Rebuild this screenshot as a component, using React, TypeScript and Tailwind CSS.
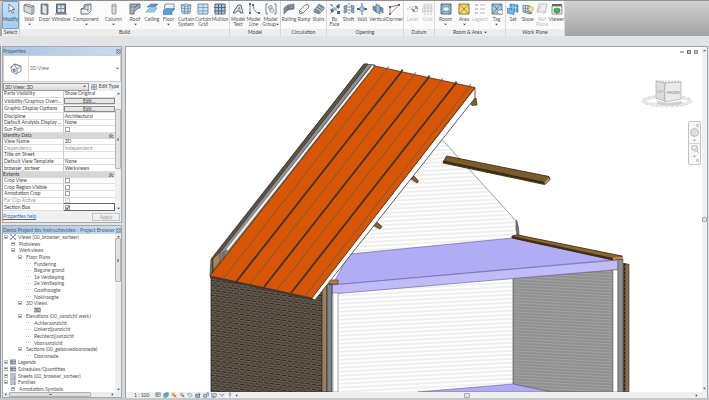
import type { ReactNode } from "react";
import { clsx } from "clsx";

type Tool = {
  label: string[];
  width: string;
  icon: ReactNode;
  menu?: boolean;
  disabled?: boolean;
};

type ToolGroup = { title: string; tools: Tool[] };

const ink = "#5c6773";
const blue = "#5b9fd0";
const pale = "#cfe2f0";

const icons = {
  modify: <path d="M4 1v8l2-2 1.4 3.4 1.3-.6L7.300 6.500H10z" fill="#fff" stroke={ink} strokeWidth=".8" />,
  wall: (
    <>
      <path d="M1 2l3-1 7 2v7l-2 1.500-8-3z" fill="#d5dade" stroke={ink} strokeWidth=".7" />
      <path d="M1 2l8 2.500v7M9 4.500L11 3" fill="none" stroke={ink} strokeWidth=".7" />
    </>
  ),
  door: (
    <>
      <path d="M2 1h7v10H2z" fill="#8b949e" stroke={ink} strokeWidth=".7" />
      <path d="M3 1l5 2v9L3 10z" fill="#e4e8eb" stroke={ink} strokeWidth=".7" />
    </>
  ),
  window: (
    <>
      <path d="M1.500 1h9v9h-9z" fill="#7f8b99" stroke={ink} />
      <path d="M3 2.500h2.500v2.500H3zM6.500 2.500H9V5H6.500zM3 6h2.500v3H3zM6.500 6H9v3H6.500z" fill="#dce9f2" />
      <path d="M0 11h12" stroke={ink} />
    </>
  ),
  component: (
    <>
      <path d="M1 6l3-1V2l3-1h4v7l-3 3H1z" fill="#eef0f2" stroke={ink} strokeWidth=".9" />
      <path d="M1 6h4V3l3-.5v6M5 6l3 1M8 2.500L11 1" fill="none" stroke={ink} strokeWidth=".7" />
    </>
  ),
  column: (
    <>
      <path d="M4 2v8.500q2 1.500 4 0V2z" fill="#d9dde1" stroke={ink} strokeWidth=".6" />
      <ellipse cx="6" cy="2" rx="2" ry="1" fill="#fff" stroke={ink} strokeWidth=".6" />
    </>
  ),
  roof: (
    <>
      <path d="M1 1h10v4H9L5 9v2H1z" fill="#a9b4be" stroke={ink} strokeWidth=".9" />
      <path d="M1 4h5l3-3M5 9V6l4-4" fill="none" stroke={ink} strokeWidth=".7" />
    </>
  ),
  ceiling: (
    <>
      <path d="M1 4l4-3h7L9 4z" fill={blue} stroke={ink} strokeWidth=".6" />
      <path d="M0 9l4-4h7L8 9zM1 7h9" fill={pale} stroke={blue} strokeWidth=".8" />
    </>
  ),
  floor: (
    <>
      <path d="M2 1h9v6L8 8H1z" fill="#eef1f3" stroke={ink} strokeWidth=".7" />
      <path d="M0 8l3-2.500h8.500L9 9v2.500H0z" fill={blue} stroke="#3d7fb5" strokeWidth=".6" />
    </>
  ),
  curtainSystem: (
    <>
      <path d="M1 2q5-2 10 0l-1 8q-4 2-8 0z" fill={pale} />
      <path d="M1 2q5 3 10 0l-1 8q-4 2-8 0zM1.500 5q5 2 9 0M2 8q4 2 8 0M4.500 3v8M8 3v8M1 2q5-2 10 0" fill="none" stroke="#4f7ba3" strokeWidth=".7" />
    </>
  ),
  curtainGrid: (
    <>
      <path d="M1 1h10v10H1z" fill={pale} stroke={ink} strokeWidth=".7" />
      <path d="M6 1v10M1 4.500h10M1 8h10" stroke={blue} strokeWidth=".8" />
    </>
  ),
  mullion: (
    <>
      <path d="M1 1h10v10H1z" fill="#9fcbe8" stroke={ink} />
      <path d="M4.500 1v10M7.500 1v10M0 4.500h12M0 8h12" stroke={ink} />
    </>
  ),
  modelText: (
    <>
      <path d="M1 10L6 2h3l2 8H8.500L8 8H5l-1.500 2z" fill="#e3e7ea" stroke={ink} />
      <path d="M6 6l1.500-2 .3 2z" fill="#fff" stroke={ink} strokeWidth=".6" />
    </>
  ),
  modelLine: (
    <>
      <path d="M2 1v9M5 2q1 8 6 8" fill="none" stroke={ink} strokeWidth=".8" />
      <path d="M1 0h2v2H1zM1 9h2v2H1zM4 1h2v2H4zM10 9h2v2h-2z" fill={ink} />
    </>
  ),
  modelGroup: (
    <>
      <path d="M3 1H1v10h2M9 1h2v10H9" fill="none" stroke={ink} strokeWidth=".8" />
      <path d="M3 4l3-2 1.500 2L5 7z" fill="#d4d9de" stroke={ink} strokeWidth=".6" />
      <circle cx="7" cy="7.500" r="2" fill="#eceff1" stroke={ink} strokeWidth=".6" />
    </>
  ),
  railing: (
    <>
      <path d="M1 5l4-3 6-1v5L5 7l-4 4z" fill="#98a1aa" />
      <path d="M1 5l4-3 6-1M1 7l4-3 6-1M1 9l4-3 6-1M1 11l4-4 6-1M1 5v6M5 2v5M11 1v5" fill="none" stroke={ink} strokeWidth=".7" />
    </>
  ),
  ramp: <path d="M1 8l6-6 3-.5L11 4l-6 6-3 1zM2 8l3 2" fill="#f1f3f5" stroke={ink} strokeWidth=".8" />,
  stairs: (
    <>
      <path d="M1 7l5-6 5 3v2l-5 5-5-2z" fill="#b7bec6" stroke={ink} strokeWidth=".7" />
      <path d="M2 6l5 3M4 4l4.500 3M5.500 2l4.500 3M2 8l4 2" stroke={ink} />
    </>
  ),
  byFace: (
    <>
      <path d="M1 1l10 10M11 1L1 11" stroke={blue} strokeWidth=".9" strokeDasharray="2 1" />
      <path d="M1 7l3-2 1 3-2 2zM7 3l3-2 1 3-2 2zM8 8h3v3H8zM1 2l2-1 1 2z" fill={ink} />
      <path d="M5 4l3 1-1 3-3-1z" fill="#8cbfe2" />
    </>
  ),
  shaft: (
    <>
      <path d="M1 3l3-1v3L1 6zM1 7l3-1v3l-3 1zM8 2l3 1v3L8 5zM8 6l3 1v3L8 9z" fill="#7fb4da" stroke={ink} strokeWidth=".6" />
      <path d="M6 0v12" stroke={ink} strokeWidth=".8" strokeDasharray="2 1" />
    </>
  ),
  wallOpening: (
    <>
      <path d="M6 0v4M6 8v4" stroke={ink} />
      <path d="M1 5h3v2H1zM8 5h3v2H8z" fill={ink} />
      <path d="M4 4h4v4H4z" fill="#a6cfea" stroke={blue} strokeWidth=".7" />
    </>
  ),
  vertical: (
    <>
      <path d="M1 3l3 1v5L1 7zM8 4l3 1v5L8 8z" fill="#7f98ae" stroke={ink} strokeWidth=".6" />
      <path d="M4 1l4 2v8L4 9z" fill="#8cc0e4" stroke={ink} strokeWidth=".7" />
    </>
  ),
  dormer: (
    <>
      <path d="M1 11V4l8-2" fill="none" stroke={ink} strokeWidth=".7" />
      <path d="M2 4l8-2-8 8" fill="none" stroke="#c9716a" strokeWidth=".8" />
      <path d="M0 10h2v2H0zM9 1h2v2H9zM0 3h2v2H0z" fill={ink} />
    </>
  ),
  level: (
    <>
      <path d="M0 6h12M2 4h3" stroke="#aaa" strokeWidth=".7" strokeDasharray="2 1" />
      <circle cx="8" cy="6" r="3" fill="#fff" stroke="#999" strokeWidth=".7" />
      <path d="M8 3a3 3 0 013 3H8zM8 9a3 3 0 01-3-3h3z" fill="#999" />
    </>
  ),
  grid: (
    <>
      <path d="M3 2v10M6 2v10M9 2v10M1 5h10M1 8h10" stroke="#b5b5b5" strokeWidth=".7" />
      <path d="M2 1h2v2H2zM5 1h2v2H5zM8 1h2v2H8zM0 4h2v2H0zM0 7h2v2H0z" fill="#fff" stroke="#b5b5b5" strokeWidth=".5" />
    </>
  ),
  room: (
    <>
      <path d="M1 1h10v10H1z" fill="#8fc5e8" stroke={ink} />
      <path d="M1 1l10 10M11 1L1 11" stroke={ink} strokeWidth=".7" />
      <path d="M3 4h6v4H3z" fill="#e9f3fa" stroke={ink} strokeWidth=".5" />
    </>
  ),
  area: (
    <>
      <path d="M1 1h10v10H1z" fill="#f8d964" stroke="#8d7834" />
      <path d="M1 1l10 10M11 1L1 11" stroke="#8d7834" strokeWidth=".8" />
    </>
  ),
  legend: (
    <>
      <path d="M1 1h3v2H1zM1 5h3v2H1zM1 9h3v2H1z" fill="#ccc" />
      <path d="M6 2h5M6 6h5M6 10h5" stroke="#bbb" />
    </>
  ),
  tag: (
    <>
      <path d="M1 1h10v10H1z" fill="#9fcbe8" stroke={ink} strokeWidth=".8" />
      <path d="M1 1l8 8M10 1L1 11" stroke={ink} strokeWidth=".8" />
      <path d="M6 9l2-2h4v4H8z" fill="#fff" stroke={ink} strokeWidth=".6" />
    </>
  ),
  set: (
    <>
      <path d="M3 1l8 1v7L3 8z" fill="#4f9dd4" stroke="#2f75aa" strokeWidth=".6" />
      <path d="M0 5l7 1.500v5L0 10z" fill="#73b6e2" stroke="#2f75aa" strokeWidth=".6" />
      <path d="M3 4l8 1M6 1.500v6.500M8.500 2v7" stroke="#d5eaf7" strokeWidth=".6" />
    </>
  ),
  show: (
    <>
      <path d="M1 2l7 1v8l-7-2z" fill={pale} stroke={ink} strokeWidth=".7" />
      <path d="M1 5l7 1M1 7.500l7 1.500M3.500 2v8M6 2.500v8" stroke={ink} strokeWidth=".6" />
      <circle cx="9" cy="6" r="2.500" fill="#fbe08a" stroke="#b39b4f" strokeWidth=".5" />
      <path d="M8 9h2v2H8z" fill="#888" />
    </>
  ),
  refPlane: <path d="M3 1h8L9 9H1zM5 3L1 9M7 11l3-2" fill="#eee" stroke="#b5b5b5" strokeWidth=".8" />,
  viewer: (
    <>
      <path d="M1 3h10v8H1z" fill="#f3f5f6" stroke={ink} strokeWidth=".7" />
      <path d="M1 1h10v2H1z" fill="#626b75" />
      <path d="M3 6l3-1 3 1v3l-3 1.500L3 9z" fill="#4aa95a" stroke="#2d7a3b" strokeWidth=".5" />
    </>
  ),
};

const toolGroups: ToolGroup[] = [
  {
    title: "Build",
    tools: [
      { label: ["Wall"], width: "w-[18px]", icon: icons.wall, menu: true },
      { label: ["Door"], width: "w-[13px]", icon: icons.door },
      { label: ["Window"], width: "w-[20px]", icon: icons.window },
      { label: ["Component"], width: "w-[30px]", icon: icons.component, menu: true },
      { label: ["Column"], width: "w-[25px]", icon: icons.column, menu: true },
      { label: ["Roof"], width: "w-[18px]", icon: icons.roof, menu: true },
      { label: ["Ceiling"], width: "w-[16px]", icon: icons.ceiling },
      { label: ["Floor"], width: "w-[17px]", icon: icons.floor, menu: true },
      { label: ["Curtain", "System"], width: "w-[18px]", icon: icons.curtainSystem },
      { label: ["Curtain", "Grid"], width: "w-[16px]", icon: icons.curtainGrid },
      { label: ["Mullion"], width: "w-[18px]", icon: icons.mullion },
    ],
  },
  {
    title: "Model",
    tools: [
      { label: ["Model", "Text"], width: "w-[16px]", icon: icons.modelText },
      { label: ["Model", "Line"], width: "w-[15px]", icon: icons.modelLine },
      { label: ["Model", "Group"], width: "w-[19px]", icon: icons.modelGroup, menu: true },
    ],
  },
  {
    title: "Circulation",
    tools: [
      { label: ["Railing"], width: "w-[16px]", icon: icons.railing },
      { label: ["Ramp"], width: "w-[14px]", icon: icons.ramp },
      { label: ["Stairs"], width: "w-[15px]", icon: icons.stairs },
    ],
  },
  {
    title: "Opening",
    tools: [
      { label: ["By", "Face"], width: "w-[15px]", icon: icons.byFace },
      { label: ["Shaft"], width: "w-[13px]", icon: icons.shaft },
      { label: ["Wall"], width: "w-[14px]", icon: icons.wallOpening },
      { label: ["Vertical"], width: "w-[17px]", icon: icons.vertical },
      { label: ["Dormer"], width: "w-[17px]", icon: icons.dormer },
    ],
  },
  {
    title: "Datum",
    tools: [
      { label: ["Level"], width: "w-[17px]", icon: icons.level, disabled: true },
      { label: ["Grid"], width: "w-[13px]", icon: icons.grid, disabled: true },
    ],
  },
  {
    title: "Room & Area",
    tools: [
      { label: ["Room"], width: "w-[21px]", icon: icons.room, menu: true },
      { label: ["Area"], width: "w-[16px]", icon: icons.area, menu: true },
      { label: ["Legend"], width: "w-[16px]", icon: icons.legend, disabled: true },
      { label: ["Tag"], width: "w-[17px]", icon: icons.tag, menu: true },
    ],
  },
  {
    title: "Work Plane",
    tools: [
      { label: ["Set"], width: "w-[14px]", icon: icons.set },
      { label: ["Show"], width: "w-[15px]", icon: icons.show },
      { label: ["Ref", "Plane"], width: "w-[14px]", icon: icons.refPlane, disabled: true },
      { label: ["Viewer"], width: "w-[15px]", icon: icons.viewer },
    ],
  },
];

function Arrow({ dir = "down", className }: { dir?: "down" | "up" | "left" | "right"; className?: string }) {
  const d = { down: "M0 1h4L2 3z", up: "M0 3h4L2 1z", left: "M3 0v4L1 2z", right: "M1 0v4l2-2z" }[dir];
  return (
    <svg viewBox="0 0 4 4" className={clsx("size-[3px] shrink-0 fill-[#444]", className)}>
      <path d={d} />
    </svg>
  );
}

function ToolButton({ tool }: { tool: Tool }) {
  const sideArrow = tool.menu && tool.label.length > 1;
  return (
    <button
      disabled={tool.disabled}
      className={clsx(
        "flex h-full shrink-0 flex-col items-center pt-[2px] leading-[5px] whitespace-nowrap",
        tool.width,
        tool.disabled ? "text-[#bbb]" : "text-[#555]",
      )}
    >
      <svg viewBox="0 0 12 12" className="mb-[2px] size-3 shrink-0" fill="none">
        {tool.icon}
      </svg>
      {tool.label.map((line, i) => (
        <span key={line} className="flex items-center">
          {line}
          {sideArrow && i === 1 && <Arrow />}
        </span>
      ))}
      {tool.menu && !sideArrow && <Arrow className="mt-px" />}
    </button>
  );
}

function Ribbon() {
  return (
    <header className="flex h-9 shrink-0 border-t border-[#8d8f93] bg-linear-to-b from-[#d2d2d2] to-[#a3a3a3] pl-[2px]">
      <section className="flex w-[18px] shrink-0 flex-col border-r border-[#d8d8d8] bg-[#f8f8f8]">
        <button className="flex h-7 flex-col items-center rounded-[1px] border border-[#6da3cf] bg-linear-to-b from-[#c9e2f6] to-[#a3cdee] pt-px leading-[5px] text-[#35506b]">
          <svg viewBox="0 0 12 12" className="mb-[2px] size-3 shrink-0">
            {icons.modify}
          </svg>
          Modify
        </button>
        <h2 className="h-[7px] bg-[#ededed] text-center leading-[7px]">Select</h2>
      </section>
      {toolGroups.map((group) => (
        <section key={group.title} className="flex shrink-0 flex-col border-r border-[#d8d8d8] bg-[#fbfbfb]">
          <div className="flex h-7">
            {group.tools.map((tool) => (
              <ToolButton key={tool.label.join(" ")} tool={tool} />
            ))}
          </div>
          <h2 className="flex h-[7px] items-center justify-center gap-[2px] bg-[#ededed] leading-[7px]">
            {group.title}
            {group.title === "Room & Area" && <Arrow />}
          </h2>
        </section>
      ))}
    </header>
  );
}

function PanelTitle({ children }: { children: ReactNode }) {
  return (
    <div className="flex h-2 shrink-0 items-center justify-between bg-linear-to-r from-[#a9c6e2] to-[#c9dced] text-[#4c6074]">
      <h2 className="leading-[8px] whitespace-nowrap">{children}</h2>
      <button aria-label="Close" className="flex size-[5px] items-center justify-center border border-[#8fa6bb]">
        <svg viewBox="0 0 4 4" className="size-[3px]">
          <path d="M0 0l4 4M4 0L0 4" stroke="#5e7489" />
        </svg>
      </button>
    </div>
  );
}

type Row = {
  name: string;
  value?: string;
  kind?: "section" | "button" | "check";
  muted?: boolean;
  checked?: boolean;
};

const properties: Row[] = [
  { name: "Parts Visibility", value: "Show Original" },
  { name: "Visibility/Graphics Overr...", value: "Edit...", kind: "button" },
  { name: "Graphic Display Options", value: "Edit...", kind: "button" },
  { name: "Discipline", value: "Architectural" },
  { name: "Default Analysis Display ...", value: "None" },
  { name: "Sun Path", kind: "check" },
  { name: "Identity Data", kind: "section" },
  { name: "View Name", value: "3D" },
  { name: "Dependency", value: "Independent", muted: true },
  { name: "Title on Sheet", value: "" },
  { name: "Default View Template", value: "None" },
  { name: "browser_sorteer", value: "Werkviews" },
  { name: "Extents", kind: "section" },
  { name: "Crop View", kind: "check" },
  { name: "Crop Region Visible", kind: "check" },
  { name: "Annotation Crop", kind: "check" },
  { name: "Far Clip Active", kind: "check", muted: true },
  { name: "Section Box", kind: "check", checked: true },
];

function PropertyRow({ row }: { row: Row }) {
  if (row.kind === "section") {
    return (
      <tr className="bg-[#d6d6d6]">
        <th colSpan={2} scope="colgroup" className="p-0 text-left font-normal">
          <span className="flex items-center justify-between pr-[2px]">
            {row.name}
            <svg viewBox="0 0 4 4" className="size-[4px]">
              <path d="M0 2l2-1.500L4 2M0 4l2-1.500L4 4" fill="none" stroke="#444" strokeWidth=".8" />
            </svg>
          </span>
        </th>
      </tr>
    );
  }
  const id = row.name.toLowerCase().replace(/[^a-z]+/g, "-");
  return (
    <tr className={clsx("border-b border-[#dedede]", row.muted && "text-[#999]")}>
      <th scope="row" className="border-r border-[#cfcfcf] p-0 pl-px text-left font-normal whitespace-nowrap">
        {row.kind === "check" ? <label htmlFor={id}>{row.name}</label> : row.name}
      </th>
      <td className={clsx("p-0", row.checked && "border border-[#666]")}>
        {row.kind === "button" && (
          <button className="block h-[6px] w-full border border-[#8b8b8b] bg-[#e6e6e6] text-center leading-[4px]">
            {row.value}
          </button>
        )}
        {row.kind === "check" && (
          <span className="relative ml-px block size-[5px]">
            <input
              id={id}
              type="checkbox"
              defaultChecked={row.checked}
              disabled={row.muted}
              className="block size-[5px] appearance-none border border-[#a2a2a2] bg-white disabled:border-[#d5d5d5]"
            />
            {row.checked && (
              <svg viewBox="0 0 5 5" className="pointer-events-none absolute inset-0 size-[5px]">
                <path d="M1 2.500l1.200 1.500L4 1" fill="none" stroke="#44598a" />
              </svg>
            )}
          </span>
        )}
        {!row.kind && <span className="pl-px">{row.value}</span>}
      </td>
    </tr>
  );
}

function Properties() {
  return (
    <section className="flex shrink-0 flex-col border border-[#a5a9ae] bg-[#f0f0f0]">
      <PanelTitle>Properties</PanelTitle>
      <div className="flex h-[27px] items-center border border-[#cfcfcf] bg-white pr-px">
        <div className="flex h-full w-[25px] items-center justify-center border-r border-[#d9d9d9]">
          <svg viewBox="0 0 12 12" className="size-3" fill="none" stroke="#707d8b" strokeWidth=".8">
            <path d="M1 5l3-4 7 2v5l-5 3-4-2z" fill="#f5f6f7" />
            <path d="M0 5l4-4 3 5M4 1l7 2-4 3v5" />
            <path d="M3 6h2v3l-2-1z" fill="#8ba3b8" />
          </svg>
        </div>
        <span className="flex-1 pl-px text-[#777]">3D View</span>
        <Arrow />
      </div>
      <div className="flex h-[9px] items-center gap-[2px] pr-[2px]">
        <div className="relative flex h-[8px] flex-1 items-center border border-[#9a9a9a] bg-linear-to-b from-[#f4f4f4] to-[#d8d8d8]">
          <select aria-label="View type" className="h-full w-full appearance-none bg-transparent pl-px leading-[6px] outline-none">
            <option>3D View: 3D</option>
          </select>
          <Arrow className="absolute right-[2px]" />
        </div>
        <button className="flex items-center gap-[2px] leading-[7px]">
          <svg viewBox="0 0 12 12" className="size-[6px]" fill="#dbe5ee" stroke="#6b7c8e">
            <path d="M1 1h5v5H1zM6 1h5v5H6zM1 6h5v5H1zM6 6h5v5H6z" />
          </svg>
          Edit Type
        </button>
      </div>
      <div className="flex">
        <div className="min-w-0 flex-1">
          <table className="h-[120px] w-full table-fixed border-collapse bg-white leading-[5px]">
            <colgroup>
              <col className="w-[54%]" />
              <col className="w-[46%]" />
            </colgroup>
            <tbody>
              {properties.map((row) => (
                <PropertyRow key={row.name} row={row} />
              ))}
            </tbody>
          </table>
        </div>
        <div className="flex w-[6px] shrink-0 flex-col items-center justify-between bg-[#f0f0f0] py-px">
          <Arrow dir="up" />
          <div className="mt-[14px] mb-auto flex h-[60px] w-full items-center justify-center rounded-[1px] border border-[#b5b5b5] bg-[#e2e2e2]">
            <span className="h-[3px] w-[2px] bg-[#999]" />
          </div>
          <Arrow />
        </div>
      </div>
      <div className="flex h-[11px] items-center justify-between pr-px">
        <a href="#help" className="text-[#2f74c0] underline">
          Properties help
        </a>
        <button disabled className="h-[8px] w-[28px] border border-[#c4c4c4] leading-[6px] text-[#999]">
          Apply
        </button>
      </div>
    </section>
  );
}

type Node = { label: string; level: number; state?: "open" | "closed"; icon?: "views" | "sheet" | "list"; current?: boolean };

const tree: Node[] = [
  { label: "Views (00_browser_sorteer)", level: 0, state: "open", icon: "views" },
  { label: "Plotviews", level: 1, state: "closed" },
  { label: "Werkviews", level: 1, state: "open" },
  { label: "Floor Plans", level: 2, state: "open" },
  { label: "Fundering", level: 3 },
  { label: "Begane grond", level: 3 },
  { label: "1e Verdieping", level: 3 },
  { label: "2e Verdieping", level: 3 },
  { label: "Goothoogte", level: 3 },
  { label: "Nokhoogte", level: 3 },
  { label: "3D Views", level: 2, state: "open" },
  { label: "3D", level: 3, current: true },
  { label: "Elevations (00_aanzicht werk)", level: 2, state: "open" },
  { label: "Achteraanzicht", level: 3 },
  { label: "Linkerzijaanzicht", level: 3 },
  { label: "Rechterzijaanzicht", level: 3 },
  { label: "Vooraanzicht", level: 3 },
  { label: "Sections (00_gebouwdoorsnede)", level: 2, state: "open" },
  { label: "Doorsnede", level: 3 },
  { label: "Legends", level: 0, state: "closed", icon: "list" },
  { label: "Schedules/Quantities", level: 0, state: "closed", icon: "list" },
  { label: "Sheets (00_browser_sorteer)", level: 0, state: "closed", icon: "sheet" },
  { label: "Families", level: 0, state: "open", icon: "sheet" },
  { label: "Annotation Symbols", level: 1, state: "closed" },
];

const indents = ["gap-[2px] pl-px", "gap-[4px] pl-[8px]", "gap-[4px] pl-[15px]", "gap-[3px] pl-[23px]"];

function TreeIcon({ kind }: { kind: Node["icon"] }) {
  return (
    <svg viewBox="0 0 6 6" className="size-[6px] shrink-0" fill="none" stroke="#5f6b78" strokeWidth=".8">
      {kind === "views" && <path d="M0 2V0h2M4 0h2v2M6 4v2H4M2 6H0V4M1 1l4 4M5 1L1 5" />}
      {kind === "list" && <path d="M0 1h6v4H0zM0 2.500h6M0 4h6M2 1v4" />}
      {kind === "sheet" && <path d="M1 0h4v6H1zM2 2h2M2 4h3" />}
    </svg>
  );
}

function ProjectBrowser() {
  return (
    <section className="flex min-h-0 flex-1 flex-col border border-[#a5a9ae] bg-white">
      <PanelTitle>Demo Project tbv Instructievideo - Project Browser</PanelTitle>
      <div className="flex min-h-0 flex-1">
        <ul className="grid min-h-0 flex-1 auto-rows-fr overflow-hidden leading-[6px] text-[#555]">
          {tree.map((node) => (
            <li key={node.label} className={clsx("flex min-h-0 items-center whitespace-nowrap", indents[node.level])}>
              {node.state ? (
                <button
                  aria-label={node.state === "open" ? "Collapse" : "Expand"}
                  className="flex size-[4px] shrink-0 items-center border border-[#bbb]"
                >
                  <span className="h-px w-full bg-[#777]" />
                </button>
              ) : (
                <span className="w-[5px] border-t border-dotted border-[#ccc]" />
              )}
              {node.icon && <TreeIcon kind={node.icon} />}
              <span className={clsx(node.current && "bg-[#d4d4d4] font-bold")}>{node.label}</span>
            </li>
          ))}
        </ul>
        <div className="flex w-[6px] shrink-0 flex-col items-center bg-[#f0f0f0] py-px">
          <Arrow dir="up" />
          <div className="mb-auto flex h-[44px] w-full items-center justify-center rounded-[1px] border border-[#b5b5b5] bg-[#e2e2e2]">
            <span className="h-[3px] w-[2px] bg-[#999]" />
          </div>
          <Arrow />
        </div>
      </div>
      <div className="flex h-[5px] shrink-0 items-center bg-[#ececec] px-px">
        <Arrow dir="left" />
        <div className="ml-[2px] flex h-full w-[82px] items-center justify-center rounded-[1px] border border-[#b0b0b0] bg-[#e0e0e0]">
          <span className="h-px w-[3px] bg-[#777]" />
        </div>
        <Arrow dir="right" className="mr-[6px] ml-auto" />
      </div>
    </section>
  );
}

// standing seams of the roof: top x/y, bottom x/y, line width
const seams = [
  [388, 68, 223, 279, 1],
  [402, 71, 236, 282, 1.8],
  [415, 74, 250, 284, 1],
  [429, 77, 264, 287, 1.8],
  [442, 80, 277, 290, 1],
  [456, 83, 291, 293, 1.8],
  [470, 86, 305, 296, 1],
];

function Model() {
  return (
    <svg viewBox="126 47 576 345" preserveAspectRatio="xMinYMin meet" className="block h-full w-full" role="img" aria-label="3D house section">
      <defs>
        <pattern id="brick" width="6" height="5" patternUnits="userSpaceOnUse" patternTransform="skewY(8)">
          <path d="M0 0h6v5H0z" fill="#6c6152" />
          <path d="M0 .5h4.500M3 3h3M0 3h1.500" stroke="#2b261e" strokeWidth="1.200" />
          <path d="M5 0v2.500M2 2.500V5" stroke="#3a342a" strokeWidth=".6" />
        </pattern>
        <pattern id="siding" width="10" height="4" patternUnits="userSpaceOnUse" patternTransform="rotate(-3)">
          <path d="M0 1h10" stroke="#d8d8d8" strokeWidth=".8" />
        </pattern>
        <pattern id="shade" width="10" height="3" patternUnits="userSpaceOnUse" patternTransform="rotate(3)">
          <path d="M0 0h10v3H0z" fill="#a3a3a3" />
          <path d="M0 1h10" stroke="#7a7a7a" strokeWidth=".9" />
        </pattern>
        <pattern id="course" width="4" height="4" patternUnits="userSpaceOnUse">
          <path d="M0 0h4v4H0z" fill="#55493a" />
          <path d="M0 1h3" stroke="#17130e" strokeWidth="2" />
        </pattern>
      </defs>

      {/* gable and back wall */}
      <path d="M442.500 140L518 223v14L345 255l28-30z" fill="url(#siding)" />
      <path d="M442.500 140L518 223" stroke="#888" strokeWidth=".8" />
      <path d="M338 293l175-15v106l-95 8h-80z" fill="url(#siding)" />
      <path d="M513 278l100-8v122h-62l-38-8z" fill="url(#shade)" stroke="#555" strokeWidth=".7" />

      {/* floor slabs */}
      <path d="M418 392l95-8 38 8z" fill="#b1abf5" stroke="#625d96" strokeWidth=".6" />
      <path d="M350 254l163-16 100 22-281 25z" fill="#b2acf5" stroke="#6d68a4" strokeWidth=".7" />
      <path d="M332 285l286-25v9.500L332 294z" fill="#c3bbf8" stroke="#6d68a4" strokeWidth=".7" />

      {/* right wall layers */}
      <path d="M613 270h5v122h-5z" fill="#fff" stroke="#777" strokeWidth=".6" />
      <path d="M618 259h5v133h-5z" fill="#8c9194" stroke="#4b4e50" strokeWidth=".6" />
      <path d="M623 263h3v129h-3z" fill="url(#course)" />
      <path d="M625 264h4v128h-4z" fill="#866d50" stroke="#3c3225" strokeWidth=".6" />
      <path d="M516 220q3 5 3 15h-2l-1-6z" fill="#777" stroke="#444" strokeWidth=".6" />
      <path d="M512 236l6-1 104 21v3l-9 1-101-22z" fill="#8a6637" stroke="#30220f" strokeWidth=".8" />
      <path d="M512 237l101 22" stroke="#3e2b11" strokeWidth="1.800" />
      <path d="M613 257.500l9-.5v2l-9 1z" fill="#c48a45" />

      {/* ridge beam */}
      <path d="M446.500 156l102.500 20.500 1 3-5.500 5L443 163z" fill="#7a5b2e" stroke="#2e210f" strokeWidth=".8" />
      <path d="M443 161.500l102 21.500" stroke="#3a2a12" strokeWidth="2" />
      <path d="M549 177l1 2.500-5 5-1-2.500z" fill="#c5984f" stroke="#3a2a12" strokeWidth=".5" />

      {/* left wall */}
      <path d="M211 275l102 24 9-11v104H211z" fill="url(#brick)" stroke="#37312a" strokeWidth=".8" />
      <path d="M322 290l5-6v108h-5z" fill="#9b805b" stroke="#3c3225" strokeWidth=".8" />
      <path d="M327 284h5v108h-5z" fill="#7e8487" stroke="#33373a" strokeWidth=".8" />
      <path d="M333 293h5v99h-5z" fill="#fff" stroke="#888" strokeWidth=".7" />
      <path d="M329 280h9v4h-9z" fill="#b28447" stroke="#4a3519" strokeWidth=".7" />

      {/* cut roof layers on the left */}
      <path d="M364 64l11 1-165 211 1-17z" fill="#8e9092" stroke="#333" strokeWidth=".7" />
      <path d="M364 64h4L218 255l-6 18v-14z" fill="#625746" stroke="#37312a" strokeWidth=".8" />
      <path d="M371 66L225 252" stroke="#55585a" strokeWidth="1.200" />
      <path d="M373 66L227 250" stroke="#f4f6f7" strokeWidth="2" />
      <path d="M213 259l7-7v10l-7 8z" fill="#a68558" stroke="#37312a" strokeWidth=".6" />
      <path d="M222 252l4-1-1 6-4 4z" fill="#6c7175" />

      {/* purlins */}
      <path d="M470 103l6-5 1 7-5 .5z" fill="#84602f" stroke="#30220f" strokeWidth=".7" />
      <path d="M411 179l3-3 4.500 5-1.500 2z" fill="#84602f" stroke="#30220f" strokeWidth=".7" />
      <path d="M372 225l4-3.500 6 5-2 2.500z" fill="#84602f" stroke="#30220f" strokeWidth=".7" />

      {/* roof */}
      <path d="M475 88v10L315 300l-4-2z" fill="#fff" stroke="#333" strokeWidth=".8" />
      <path d="M375 66l100 21.500L312 298 210 276z" fill="#d85503" stroke="#4a2a17" strokeWidth=".8" />
      <path d="M210 277l102 22" stroke="#3f3a36" strokeWidth="1.800" />
      {seams.map(([x1, y1, x2, y2, w]) => (
        <line key={x1} x1={x1} y1={y1} x2={x2} y2={y2} stroke={w > 1 ? "#3a352f" : "#6f5a4b"} strokeWidth={w} />
      ))}
      {seams.map(([x1, y1, , , w]) => (
        <path key={x1} d={`M${x1 - 0.5} ${y1}l1-1.500`} stroke="#444" strokeWidth={w} />
      ))}
    </svg>
  );
}

function ViewCube() {
  return (
    <svg viewBox="0 0 54 30" className="absolute top-[33px] right-2 h-[30px] w-[54px]">
      <ellipse cx="27" cy="21" rx="23" ry="4" fill="none" stroke="#e8e8e8" strokeWidth="3" />
      <ellipse cx="27" cy="21" rx="25" ry="6" fill="none" stroke="#c4c4c4" strokeWidth=".6" strokeDasharray="3 2" />
      <path d="M17 20l10 3 15-2v3q-12 3-25 0z" fill="#bbb" opacity=".6" />
      <path d="M16 1h24l1 1-15 1z" fill="#f3f3f3" stroke="#aaa" strokeWidth=".6" strokeDasharray="2 1" />
      <path d="M16 1l9 2v18l-9-3z" fill="#dcdcdc" stroke="#aaa" strokeWidth=".7" />
      <path d="M25 3l16-1v17l-16 3z" fill="#ebebeb" stroke="#aaa" strokeWidth=".7" />
      <text x="27" y="14" fontSize="4" fill="#777">FRONT</text>
      <text x="17" y="13" fontSize="3" fill="#999">LEFT</text>
    </svg>
  );
}

function NavigationBar() {
  return (
    <nav className="absolute top-[74px] right-px flex h-[44px] w-[13px] flex-col items-center justify-between rounded-[2px] border border-[#c4c4c4] bg-[#f7f7f7] py-[2px]">
      <span className="mr-px size-[3px] self-end rounded-full border border-[#aaa]" />
      <button aria-label="Steering wheel">
        <svg viewBox="0 0 10 10" className="size-[9px]" fill="none" stroke="#b8b8b8">
          <circle cx="5" cy="5" r="4" strokeWidth="1.500" />
          <circle cx="5" cy="5" r="1.800" />
        </svg>
      </button>
      <Arrow className="opacity-60" />
      <hr className="w-full border-[#d5d5d5]" />
      <button aria-label="Zoom region">
        <svg viewBox="0 0 8 8" className="size-[8px]" fill="none" stroke="#aaa" strokeWidth=".8">
          <path d="M1 1h5v4H1z" />
          <circle cx="5" cy="5" r="1.500" fill="#fff" />
          <path d="M6 6l2 2" />
        </svg>
      </button>
      <Arrow className="opacity-60" />
      <span className="mr-px size-[3px] self-end rounded-full border border-[#aaa]" />
    </nav>
  );
}

function WindowControls() {
  return (
    <div className="absolute top-[3px] right-1 flex items-center gap-[3px]">
      <button aria-label="Minimize" className="h-[2px] w-[4px] bg-[#aaa]" />
      <button aria-label="Restore" className="size-[4px] border border-[#777] bg-[#ccc]" />
      <button aria-label="Close view" className="size-[4px] border border-[#999] bg-[#bbb]" />
    </div>
  );
}

const viewControls = [
  { name: "Detail level", art: <path d="M1 1h6v5H1zM1 3h6M3 1v5" fill="#ddd" stroke="#667" strokeWidth=".7" /> },
  { name: "Visual style", art: <path d="M1 3l2-2h4v4L5 7H1zM1 3h4v4M5 3l2-2" fill="#75b9dc" stroke="#39749b" strokeWidth=".7" /> },
  { name: "Sun path", art: <><circle cx="3" cy="3" r="2.500" fill="#f2ae34" /><path d="M4 4l3 3M7 4L4 7" stroke="#cf3d2e" /></> },
  { name: "Shadows", art: <><circle cx="3.500" cy="3" r="2.500" fill="#b4bdc9" /><path d="M4 4l3 3M7 4L4 7" stroke="#cf3d2e" /></> },
  { name: "Rendering", art: <path d="M1 2h4l2 3-3 2-3-3z" fill="#d9e1e8" stroke="#6680a0" strokeWidth=".7" /> },
  { name: "Crop view", art: <><path d="M1 3h5v4H1z" fill="#a3bdd6" stroke="#38658f" /><path d="M5 1l2 3" stroke="#cf3d2e" /></> },
  { name: "Crop region", art: <path d="M1 3h4v4H1zM5 1h2v5" fill="#a9cce5" stroke="#33699b" strokeWidth=".8" /> },
  { name: "Lock view", art: <path d="M1 1v6h5M3 2h4v4H3z" fill="#e0e3e6" stroke="#5f6c78" strokeWidth=".8" /> },
  { name: "Hide", art: <path d="M1 2q3 5 6 0M3 5l2 2" fill="none" stroke="#677c94" /> },
  { name: "Reveal", art: <path d="M3 1h2v4H3zM3 7h2" fill="#9ecbe9" stroke="#5e94bd" strokeWidth=".7" /> },
];

function Viewport() {
  return (
    <main className="flex min-w-0 flex-1 flex-col border-t border-l border-[#a0a4a8] bg-white">
      <div className="flex min-h-0 flex-1">
        <div className="relative min-w-0 flex-1">
          <Model />
          <WindowControls />
          <ViewCube />
          <NavigationBar />
        </div>
        <div className="flex w-[5px] shrink-0 flex-col items-center bg-[#f0f0f0] py-[2px]">
          <Arrow dir="up" />
          <div className="my-auto size-[5px] rounded-[1px] border border-[#a9a9a9] bg-[#e2e2e2]" />
          <Arrow />
        </div>
      </div>
      <div className="flex h-[6px] shrink-0 items-center bg-[#efefef] pr-[9px] pl-[8px]">
        <span className="w-[21px] leading-[6px] whitespace-nowrap">1 : 100</span>
        {viewControls.map((control) => (
          <button key={control.name} aria-label={control.name} className="w-2">
            <svg viewBox="0 0 8 8" className="size-[6px]">
              {control.art}
            </svg>
          </button>
        ))}
        <Arrow dir="left" />
        <div className="flex flex-1 justify-center">
          <div className="h-[5px] w-[6px] rounded-[1px] border border-[#a9a9a9] bg-[#e2e2e2]" />
        </div>
        <Arrow dir="right" />
      </div>
    </main>
  );
}

export default function App() {
  return (
    <div className="flex h-screen flex-col overflow-hidden bg-[#e1e3e5] font-['Lato','Open_Sans',sans-serif] text-[5px] text-[#444]">
      <Ribbon />
      <div className="mt-[10px] flex min-h-0 flex-1 border-b-2 border-[#c5c8cb]">
        <div className="flex w-[122px] shrink-0 flex-col gap-[2px] border-l border-[#8c949c] pl-px">
          <Properties />
          <ProjectBrowser />
        </div>
        <div className="w-[3px] shrink-0 bg-[#d5d8dc]" />
        <Viewport />
        <div className="w-[2px] shrink-0 border-l border-[#9ba5b2] bg-[#dfe3e8]" />
      </div>
    </div>
  );
}
